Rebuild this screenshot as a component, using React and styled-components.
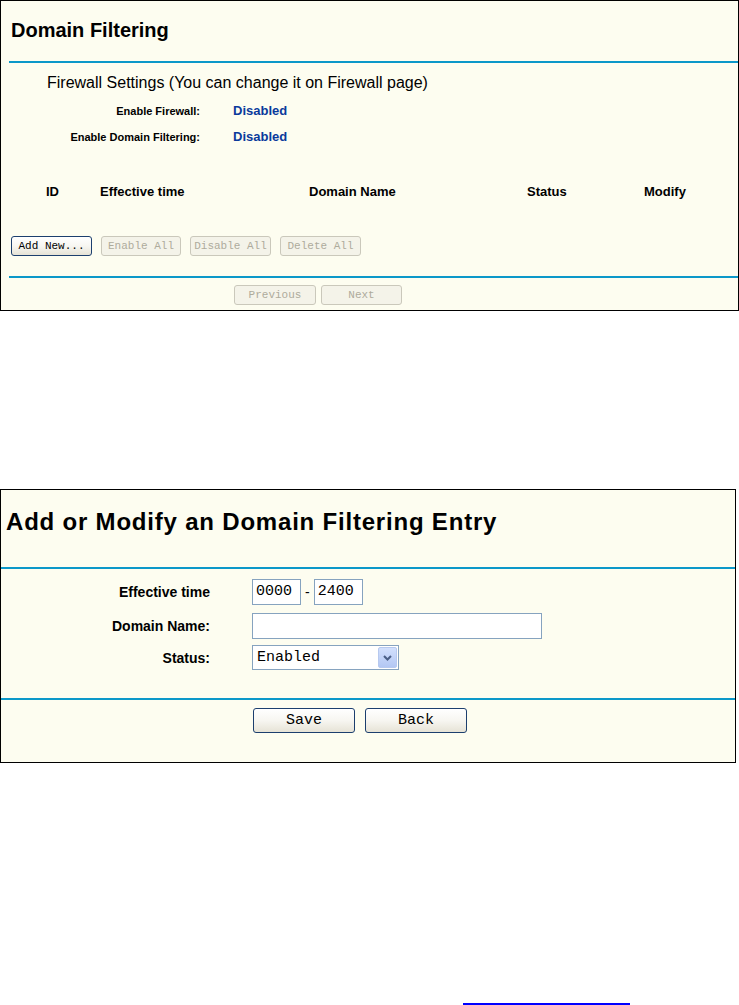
import React from "react";
import styled, { createGlobalStyle } from "styled-components";

const GlobalStyle = createGlobalStyle`
  html, body { margin: 0; padding: 0; background: #ffffff; }
  body { font-family: "Liberation Sans", Arial, sans-serif; color: #000; }
`;

const Page = styled.div`
  display: flex;
  flex-direction: column;
  width: 739px;
`;

const Panel = styled.section`
  box-sizing: border-box;
  width: ${(p) => p.$w}px;
  height: ${(p) => p.$h}px;
  margin-top: ${(p) => p.$mt || 0}px;
  border: 1px solid #000;
  background: #fdfdf0;
  display: flex;
  flex-direction: column;
`;

const PageTitle = styled.h1`
  margin: ${(p) => p.$mt}px 0 0 ${(p) => p.$ml}px;
  font-size: ${(p) => p.$size}px;
  letter-spacing: ${(p) => p.$ls || 0}px;
  line-height: ${(p) => p.$lh}px;
  font-weight: bold;
  white-space: nowrap;
`;

const Rule = styled.div`
  height: 2px;
  background: #0b98c9;
  margin-top: ${(p) => p.$mt}px;
  margin-left: ${(p) => p.$ml || 0}px;
`;

const SubTitle = styled.div`
  margin: 11px 0 0 46px;
  font-size: 16px;
  line-height: 18px;
  white-space: nowrap;
`;

const InfoGrid = styled.div`
  margin-top: 6px;
  display: grid;
  grid-template-columns: 199px 1fr;
  grid-auto-rows: 26px;
  column-gap: 33px;
  align-items: baseline;
`;

const InfoLabel = styled.div`
  text-align: right;
  font-size: 11px;
  font-weight: bold;
  line-height: 26px;
  white-space: nowrap;
`;

const InfoValue = styled.div`
  font-size: 13px;
  font-weight: bold;
  line-height: 26px;
  color: #0a3a9c;
`;

const HeaderRow = styled.div`
  margin-top: 32px;
  padding-left: 45px;
  display: grid;
  grid-template-columns: 54px 209px 218px 117px 1fr;
  font-size: 13px;
  font-weight: bold;
  line-height: 20px;
  white-space: nowrap;
`;

const ButtonRow = styled.div`
  display: flex;
  gap: ${(p) => p.$gap}px;
  margin-top: ${(p) => p.$mt}px;
  padding-left: ${(p) => p.$pl}px;
`;

const XpButton = styled.button`
  box-sizing: border-box;
  width: ${(p) => p.$w}px;
  height: ${(p) => p.$h}px;
  padding: 0;
  border-radius: 3px;
  font-family: "Liberation Mono", "Courier New", monospace;
  font-size: ${(p) => p.$fs}px;
  white-space: nowrap;
  cursor: default;
  border: 1px solid ${(p) => (p.disabled ? "#cac8bb" : "#1c3f6e")};
  color: ${(p) => (p.disabled ? "#aeab9c" : "#000")};
  background: ${(p) =>
    p.disabled
      ? "#f4f3e9"
      : "linear-gradient(#ffffff 0%, #f7f6f1 50%, #e6e3d6 100%)"};
`;

const FieldRow = styled.div`
  display: grid;
  grid-template-columns: 209px auto;
  column-gap: 42px;
  align-items: center;
  height: ${(p) => p.$h}px;
  margin-top: ${(p) => p.$mt}px;
`;

const FieldLabel = styled.div`
  text-align: right;
  font-size: 14px;
  font-weight: bold;
  white-space: nowrap;
`;

const Inline = styled.div`
  display: flex;
  align-items: center;
  gap: 4px;
`;

const TextBox = styled.div`
  box-sizing: border-box;
  width: ${(p) => p.$w}px;
  height: 26px;
  border: 1px solid #86a3bf;
  background: #ffffff;
  padding-left: 3px;
  font-family: "Liberation Mono", "Courier New", monospace;
  font-size: 15px;
  line-height: 24px;
`;

const Dash = styled.span`
  font-size: 14px;
  line-height: 14px;
`;

const SelectBox = styled.div`
  box-sizing: border-box;
  width: 147px;
  height: 25px;
  border: 1px solid #86a3bf;
  background: #ffffff;
  display: flex;
  align-items: center;
  justify-content: space-between;
  padding: 0 1px 0 4px;
  font-family: "Liberation Mono", "Courier New", monospace;
  font-size: 15px;
`;

const ArrowBox = styled.span`
  box-sizing: border-box;
  width: 19px;
  height: 21px;
  border: 1px solid #b7c9ef;
  border-radius: 2px;
  background: linear-gradient(#d2e0fd, #b3c7f3);
  display: flex;
  align-items: center;
  justify-content: center;
`;

const LinkRule = styled.div`
  margin: 240px 0 0 463px;
  width: 167px;
  height: 2px;
  background: #0000ff;
`;

export default function App() {
  return (
    <Page>
      <GlobalStyle />
      <Panel $w={739} $h={311}>
        <PageTitle $mt={17} $ml={10} $size={20} $lh={24}>
          Domain Filtering
        </PageTitle>
        <Rule $mt={19} $ml={8} />
        <SubTitle>Firewall Settings (You can change it on Firewall page)</SubTitle>
        <InfoGrid>
          <InfoLabel>Enable Firewall:</InfoLabel>
          <InfoValue>Disabled</InfoValue>
          <InfoLabel>Enable Domain Filtering:</InfoLabel>
          <InfoValue>Disabled</InfoValue>
        </InfoGrid>
        <HeaderRow>
          <span>ID</span>
          <span>Effective time</span>
          <span>Domain Name</span>
          <span>Status</span>
          <span>Modify</span>
        </HeaderRow>
        <ButtonRow $gap={9} $mt={34} $pl={10}>
          <XpButton $w={81} $h={20} $fs={11}>Add New...</XpButton>
          <XpButton $w={80} $h={20} $fs={11} disabled>Enable All</XpButton>
          <XpButton $w={81} $h={20} $fs={11} disabled>Disable All</XpButton>
          <XpButton $w={81} $h={20} $fs={11} disabled>Delete All</XpButton>
        </ButtonRow>
        <Rule $mt={20} $ml={8} />
        <ButtonRow $gap={5} $mt={7} $pl={233}>
          <XpButton $w={82} $h={20} $fs={11} disabled>Previous</XpButton>
          <XpButton $w={81} $h={20} $fs={11} disabled>Next</XpButton>
        </ButtonRow>
      </Panel>

      <Panel $w={736} $h={274} $mt={178}>
        <PageTitle $mt={18} $ml={5} $size={24} $ls={0.8} $lh={28}>
          Add or Modify an Domain Filtering Entry
        </PageTitle>
        <Rule $mt={31} />
        <FieldRow $h={26} $mt={10}>
          <FieldLabel>Effective time</FieldLabel>
          <Inline>
            <TextBox $w={49}>0000</TextBox>
            <Dash>-</Dash>
            <TextBox $w={49}>2400</TextBox>
          </Inline>
        </FieldRow>
        <FieldRow $h={26} $mt={8}>
          <FieldLabel>Domain Name:</FieldLabel>
          <TextBox $w={290} />
        </FieldRow>
        <FieldRow $h={25} $mt={6}>
          <FieldLabel>Status:</FieldLabel>
          <SelectBox>
            <span>Enabled</span>
            <ArrowBox>
              <svg width="9" height="6" viewBox="0 0 9 6">
                <polyline
                  points="1,1 4.5,4.5 8,1"
                  fill="none"
                  stroke="#4a5f86"
                  strokeWidth="2"
                />
              </svg>
            </ArrowBox>
          </SelectBox>
        </FieldRow>
        <Rule $mt={28} />
        <ButtonRow $gap={10} $mt={8} $pl={252}>
          <XpButton $w={102} $h={25} $fs={15}>Save</XpButton>
          <XpButton $w={102} $h={25} $fs={15}>Back</XpButton>
        </ButtonRow>
      </Panel>

      <LinkRule />
    </Page>
  );
}
